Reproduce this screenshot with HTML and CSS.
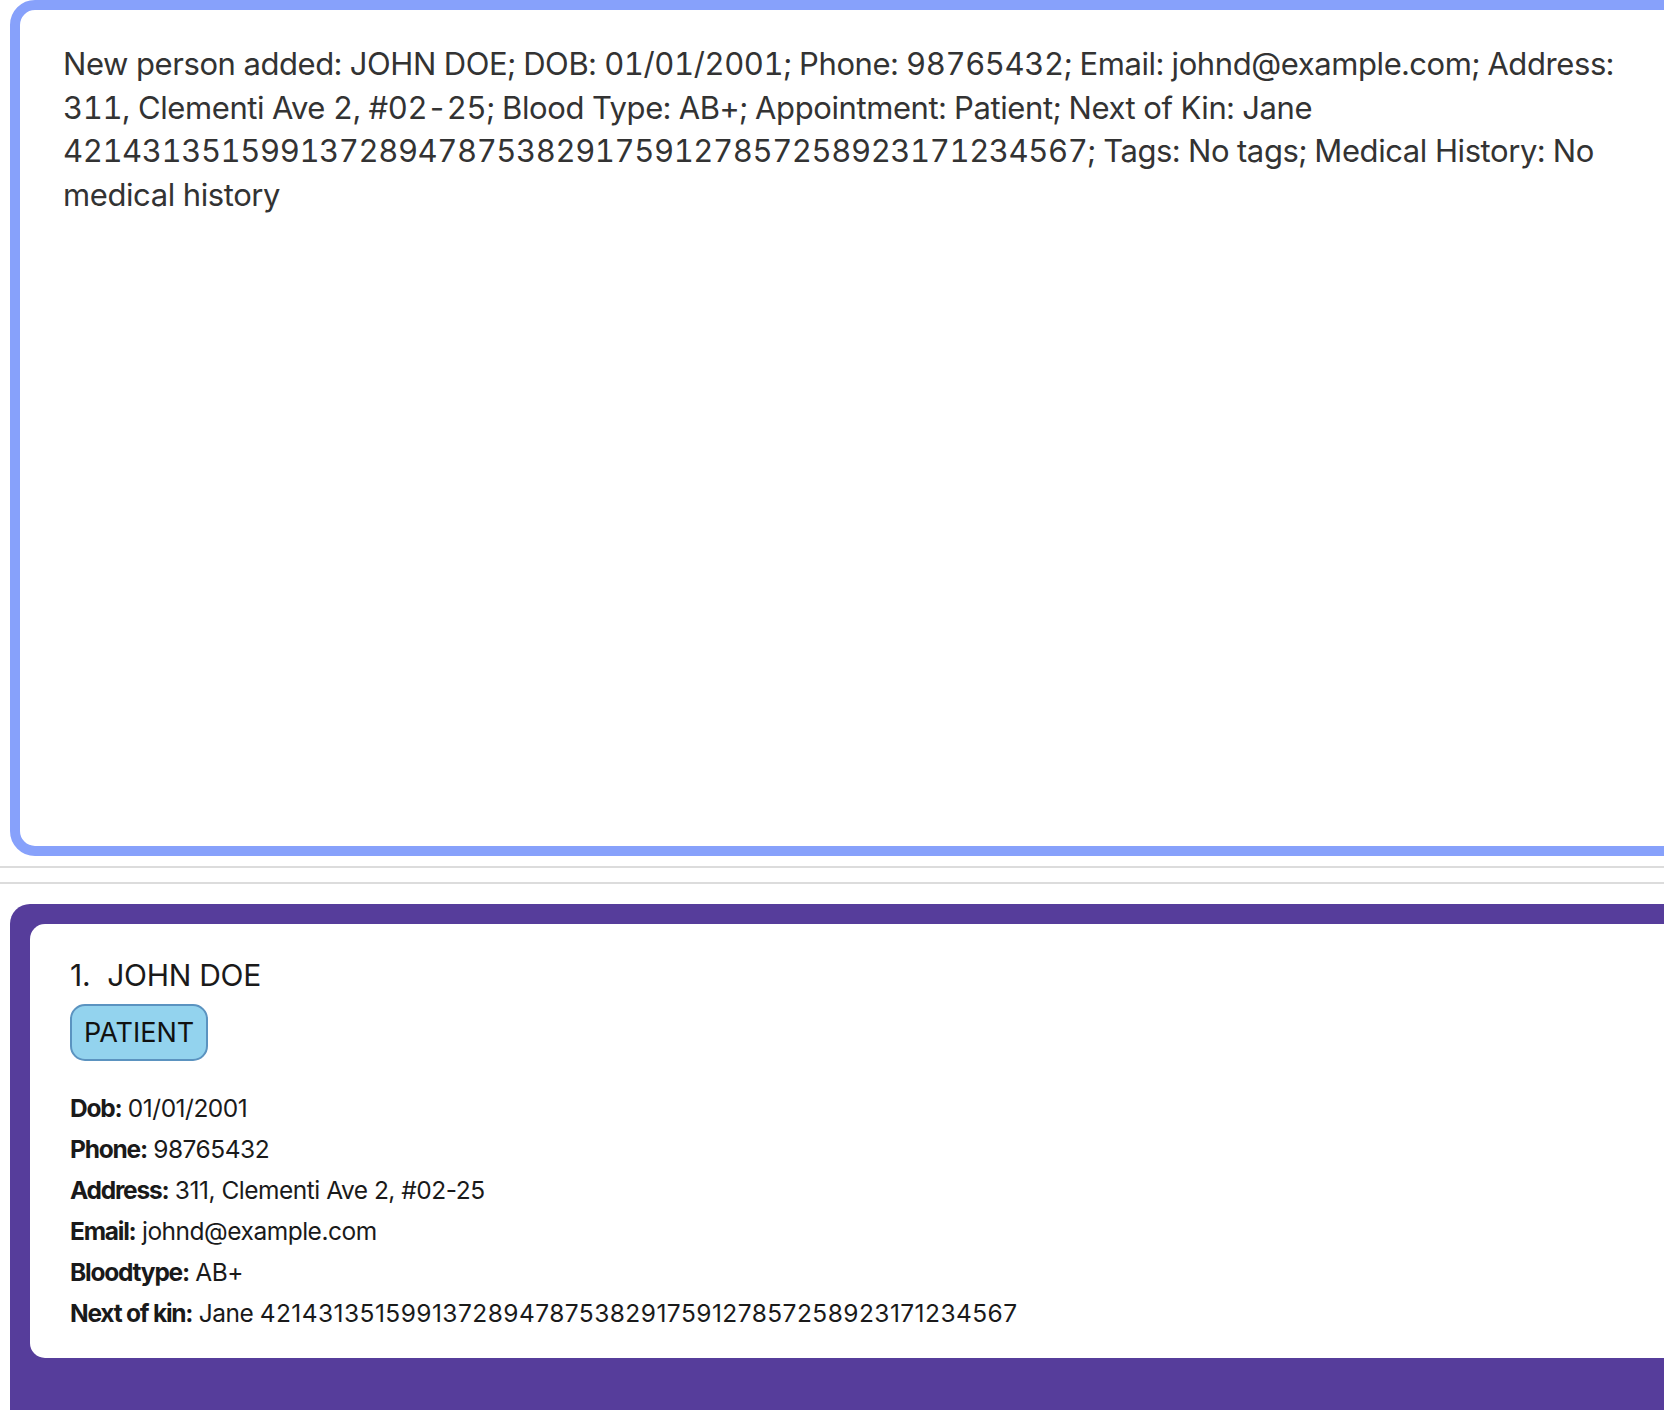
FILE: index.html
```html
<!DOCTYPE html>
<html lang="en">
<head>
<meta charset="utf-8">
<title>Result</title>
<link rel="stylesheet" href="styles.css">
</head>
<body>
<div class="app">
  <section class="result-box">
    <p class="result-text">New person added: JOHN DOE; DOB: 01/01/2001; Phone: 98765432; Email: johnd@example.com; Address: 311, Clementi Ave 2, #02-25; Blood Type: AB+; Appointment: Patient; Next of Kin: Jane 4214313515991372894787538291759127857258923171234567; Tags: No tags; Medical History: No medical history</p>
  </section>
  <div class="divider"></div>
  <section class="list-panel">
    <article class="person-card">
      <h2 class="person-name"><span class="index">1.</span>JOHN DOE</h2>
      <div class="tags"><span class="tag">PATIENT</span></div>
      <ul class="fields">
        <li><b>Dob:</b> 01/01/2001</li>
        <li><b>Phone:</b> 98765432</li>
        <li><b>Address:</b> 311, Clementi Ave 2, #02-25</li>
        <li><b>Email:</b> johnd@example.com</li>
        <li><b>Bloodtype:</b> AB+</li>
        <li><b>Next of kin:</b> Jane <span class="num">4214313515991372894787538291759127857258923171234567</span></li>
      </ul>
    </article>
  </section>
</div>
</body>
</html>
```

FILE: styles.css
```css
html, body {
  margin: 0;
  padding: 0;
  background: #ffffff;
  overflow: hidden;
}

.app {
  width: 1664px;
  height: 1410px;
  overflow: hidden;
  font-family: Inter, "Noto Sans", sans-serif;
}

.result-box {
  box-sizing: border-box;
  margin: 0 -40px 0 10px;
  height: 856px;
  border: 10px solid #87a1fb;
  border-radius: 25px;
  padding: 32px 34px 0 43px;
  background: #ffffff;
}

.result-text {
  margin: 0;
  font-size: 31px;
  line-height: 43.5px;
  letter-spacing: -0.013em;
  font-variant-numeric: tabular-nums;
  color: #333333;
}

.divider {
  margin-top: 10px;
  height: 14px;
  border-top: 2px solid #dcdcdc;
  border-bottom: 2px solid #dcdcdc;
}

.list-panel {
  margin: 20px -40px 0 10px;
  height: 600px;
  background: #563d9b;
  border-radius: 20px;
  padding: 20px 0 0 20px;
}

.person-card {
  box-sizing: border-box;
  height: 434px;
  background: #ffffff;
  border-radius: 15px;
  padding: 32px 40px 0 40px;
  color: #1a1a1a;
}

.person-name {
  margin: 0;
  font-size: 30px;
  font-weight: 400;
  line-height: 38px;
  letter-spacing: -0.01em;
}

.index {
  margin-right: 17px;
}

.tags {
  display: flex;
  margin-top: 10px;
}

.tag {
  box-sizing: border-box;
  height: 57px;
  display: inline-flex;
  align-items: center;
  padding: 0 12px;
  background: #93d3ee;
  border: 2px solid #5b93c0;
  border-radius: 15px;
  font-size: 27px;
  color: #111111;
}

.fields {
  list-style: none;
  margin: 27px 0 0 0;
  padding: 0;
  font-size: 24.5px;
  line-height: 41px;
  letter-spacing: -0.02em;
}

.fields b {
  font-weight: 700;
  letter-spacing: -0.05em;
}

.fields .num {
  letter-spacing: 0.45px;
}
```
